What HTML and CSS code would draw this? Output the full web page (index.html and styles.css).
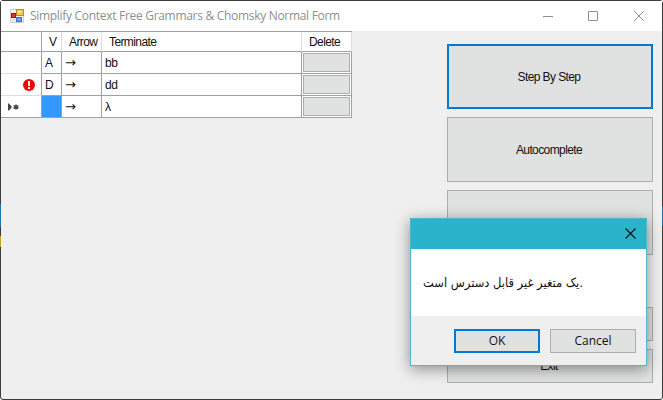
FILE: index.html
```html
<!DOCTYPE html>
<html lang="en">
<head>
<meta charset="utf-8">
<title>Simplify Context Free Grammars &amp; Chomsky Normal Form</title>
<link rel="stylesheet" href="styles.css">
</head>
<body>
<div class="window">
  <header class="titlebar">
    <svg class="app-icon" width="14" height="14" viewBox="0 0 14 14">
      <rect x="0.5" y="0.5" width="13" height="13" fill="#f4f4f4" stroke="#cfcfcf"/>
      <rect x="6.5" y="0.5" width="7" height="6" fill="#f8c84a" stroke="#b98a26"/>
      <rect x="8" y="2" width="3" height="2" fill="#ffe9a0"/>
      <rect x="1.5" y="4.5" width="4" height="4" fill="#d8352c" stroke="#962018"/>
      <rect x="6.5" y="8.5" width="5" height="4" fill="#6aa5f5" stroke="#3d71c4"/>
      <rect x="1.5" y="10" width="4" height="2.5" fill="#e2e4e8"/>
    </svg>
    <h1 class="title">Simplify Context Free Grammars &amp; Chomsky Normal Form</h1>
    <svg class="controls" width="100" height="12" viewBox="0 0 100 12" fill="none" stroke="#8f8f8f">
      <path d="M0 6.5h10M45.5 1.5h9v9h-9zM91 1l10 10M101 1l-10 10"/>
    </svg>
  </header>
  <main class="client">
    <div class="grid">
      <div class="cell head corner"></div><div class="cell head">V</div><div class="cell head">Arrow</div><div class="cell head">Terminate</div><div class="cell head">Delete</div>
      <div class="cell marker"></div><div class="cell">A</div><div class="cell arrow">→</div><div class="cell">bb</div><div class="cell del"><span class="del-btn"></span></div>
      <div class="cell marker">
        <svg class="error" width="12" height="12" viewBox="0 0 12 12"><circle cx="6" cy="6" r="6" fill="#f00808"/><path d="M5 2h2v5H5zM5 8h2v2H5z" fill="#fff"/></svg>
      </div><div class="cell">D</div><div class="cell arrow">→</div><div class="cell">dd</div><div class="cell del"><span class="del-btn"></span></div>
      <div class="cell marker last">
        <svg class="new-row" width="12" height="8" viewBox="0 0 12 8"><path d="M0 0.5h1l3 3.5-3 3.5H0z" fill="#444"/><path d="M8 1.5v5M5.6 2.6l4.8 2.8M5.6 5.4l4.8-2.8" stroke="#444" stroke-width="1.4"/></svg>
      </div><div class="cell selected"></div><div class="cell arrow">→</div><div class="cell">λ</div><div class="cell del"><span class="del-btn"></span></div>
    </div>
    <div class="actions">
      <button class="btn tall primary">Step By Step</button>
      <button class="btn tall">Autocomplete</button>
      <button class="btn tall"></button>
      <button class="btn short first-short"></button>
      <button class="btn short">Exit</button>
    </div>
  </main>
  <i class="edge blue-l"></i><i class="edge gold-l"></i><i class="edge blue-r"></i>
</div>
<section class="dialog">
  <div class="dialog-title">
    <svg width="11" height="11" viewBox="0 0 11 11" stroke="#111" stroke-width="1.2" fill="none"><path d="M0.5 0.5l10 10M10.5 0.5l-10 10"/></svg>
  </div>
  <div class="dialog-body"><p class="message">یک متغیر غیر قابل دسترس است<span>.</span></p></div>
  <div class="dialog-footer">
    <button class="dlg-btn primary">OK</button>
    <button class="dlg-btn">Cancel</button>
  </div>
</section>
</body>
</html>
```
FILE: styles.css
```css
* { box-sizing: border-box; }
body { margin: 0; width: 663px; height: 400px; overflow: hidden; background: #fff; }
.window {
  position: relative; width: 663px; height: 400px;
  display: flex; flex-direction: column;
  border: 1px solid #3c3a3d; background: #efefef; border-radius: 3px;
}
.titlebar {
  display: flex; align-items: center; flex: none;
  height: 30px; padding: 0 19px 0 9px; background: #fff;
}
.app-icon { flex: none; margin-right: 6px; }
.title {
  margin: 0; flex: 1; white-space: nowrap;
  font: 400 12px/16px "Open Sans", sans-serif; letter-spacing: -0.3px; color: #8f8f8f;
}
.controls { flex: none; overflow: visible; }
.client { display: flex; justify-content: space-between; align-items: flex-start; padding-right: 9px; }
.grid {
  display: grid; grid-template-columns: 41px 20px 40px 200px 50px; grid-template-rows: 20px 22px 22px 22px;
  border-top: 1px solid #a0a0a0;
  font: 12px/20px "Liberation Sans", sans-serif; letter-spacing: -0.4px; color: #111;
}
.cell {
  display: flex; align-items: center; padding-left: 3px; background: #fff; min-width: 0;
  border-right: 1px solid #a0a0a0; border-bottom: 1px solid #a0a0a0; white-space: nowrap;
}
.head { padding-left: 7px; letter-spacing: -0.6px; border-right-color: #dedede; }
.corner { border-right-color: #a0a0a0; }
.marker { border-bottom-color: #dedede; padding: 0; }
.last { border-bottom-color: #a0a0a0; }
.error { margin-left: 22px; }
.new-row { margin-left: 7px; }
.arrow { font-family: "DejaVu Sans", sans-serif; font-size: 13px; }
.selected { background: #3399ff; }
.del { padding: 1px; }
.del-btn { width: 47px; height: 19px; background: #e0e1e1; border: 1px solid #adadad; }
.actions { display: flex; flex-direction: column; gap: 8px; width: 206px; padding-top: 13px; }
button { margin: 0; padding: 0; color: #111; background: #e0e1e1; border: 1px solid #adadad; }
.btn { width: 206px; padding-right: 2px; font: 12px/14px "Liberation Sans", sans-serif; letter-spacing: -0.6px; }
.tall { height: 65px; }
.short { height: 34px; }
.first-short { margin-top: 44px; }
button.primary { border: 2px solid #0078d7; }
.edge { position: absolute; width: 1px; }
.blue-l { left: -1px; top: 203px; height: 23px; background: #1d76a8; }
.gold-l { left: -1px; top: 235px; height: 11px; background: #c9a21c; }
.blue-r { right: -1px; top: 205px; height: 20px; background: #1d6fae; }
.dialog {
  position: absolute; left: 410px; top: 218px; width: 237px; height: 148px;
  display: flex; flex-direction: column; border: 1px solid #4fb9ca; background: #fff;
  box-shadow: 0 3px 14px rgba(0, 0, 0, 0.42);
}
.dialog-title {
  height: 30px; flex: none; display: flex; justify-content: flex-end; align-items: center;
  padding: 0 10px 1px 0; background: #29b4cc;
}
.dialog-body { flex: 1; display: flex; align-items: center; padding-left: 12px; }
.message {
  margin: 0; direction: ltr; white-space: nowrap; color: #111;
  font: 12.5px/18px "DejaVu Sans", sans-serif;
  transform: scaleX(0.92); transform-origin: left center;
}
.dialog-footer { height: 49px; flex: none; display: flex; gap: 10px; padding: 13px 10px 0 43px; background: #efefef; }
.dlg-btn { width: 86px; height: 24px; font: 12px/16px "Open Sans", sans-serif; }
```
